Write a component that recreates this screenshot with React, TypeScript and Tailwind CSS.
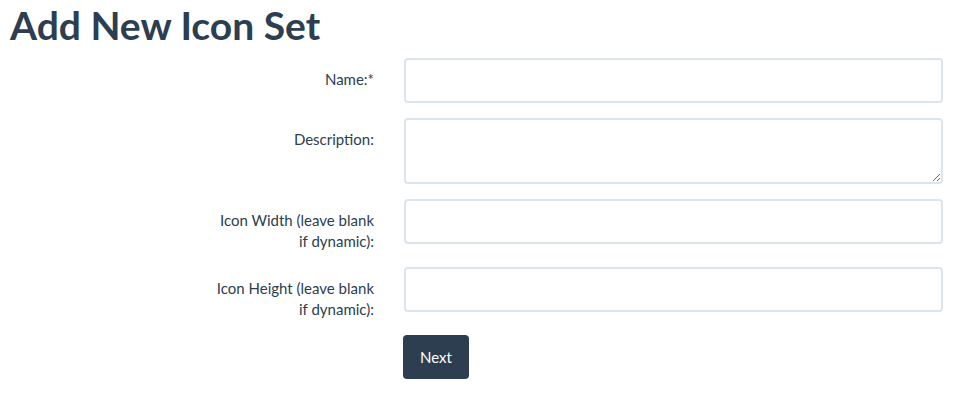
export default function App() {
  const font = { fontFamily: "Lato, 'Noto Sans', sans-serif" };
  const labelCls =
    "w-[160px] ml-[204px] mr-[30px] shrink-0 text-right pt-[11px] text-[15px] leading-[21px] text-[#2c3e50]";
  const inputCls =
    "flex-1 h-[45px] border-2 border-[#dce4ec] rounded-[4px] bg-white px-[13px] text-[15px] outline-none";
  return (
    <div className="bg-white min-h-[394px] pl-[10px] pr-[10px] text-[#2c3e50]" style={font}>
      <h1 className="text-[39px] leading-[44px] font-bold pt-[3px] m-0">Add New Icon Set</h1>
      <form className="mt-[11px] flex flex-col gap-[15px]">
        <div className="flex">
          <label className={labelCls}>Name:*</label>
          <input className={inputCls} type="text" />
        </div>
        <div className="flex">
          <label className={labelCls}>Description:</label>
          <textarea className="flex-1 h-[66px] border-2 border-[#dce4ec] rounded-[4px] bg-white px-[13px] py-[8px] text-[15px] outline-none resize-y" />
        </div>
        <div className="flex items-start">
          <label className={labelCls}>Icon Width (leave blank if dynamic):</label>
          <input className={inputCls} type="text" />
        </div>
        <div className="flex items-start">
          <label className={labelCls}>Icon Height (leave blank if dynamic):</label>
          <input className={inputCls} type="text" />
        </div>
        <div className="flex">
          <div className="w-[160px] ml-[204px] mr-[30px] shrink-0" />
          <button
            type="button"
            className="w-[66px] h-[44px] bg-[#2c3e50] text-white text-[15px] rounded-[4px] -ml-[1px]"
          >
            Next
          </button>
        </div>
      </form>
    </div>
  );
}
